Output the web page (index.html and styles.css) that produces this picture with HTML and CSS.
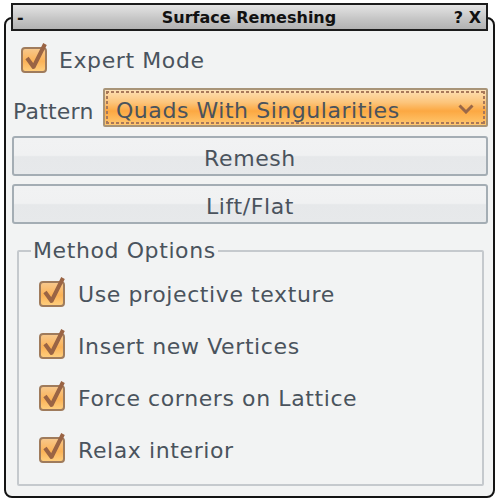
FILE: index.html
```html
<!DOCTYPE html>
<html>
<head>
<meta charset="utf-8">
<link rel="stylesheet" href="styles.css">
</head>
<body>
<div class="panel">
  <div class="titlebar">
    <span class="tb-left">-</span>
    <span class="tb-title">Surface Remeshing</span>
    <span class="tb-right">? X</span>
  </div>

  <div class="check-row expert">
    <svg class="cb" viewBox="0 0 28 32" width="28" height="32"><defs><linearGradient id="g1" x1="0" y1="0" x2="0" y2="1"><stop offset="0" stop-color="#f7c98f"/><stop offset="0.55" stop-color="#fbb257"/><stop offset="1" stop-color="#ffd080"/></linearGradient></defs><rect x="1" y="7" width="24" height="24" rx="3" fill="url(#g1)" stroke="#9f7b5c" stroke-width="2"/><path d="M6 17 L12.5 26 L24 3" fill="none" stroke="#9a6444" stroke-width="4" stroke-linejoin="round"/></svg>
    <span class="label">Expert Mode</span>
  </div>

  <div class="pattern-row">
    <span class="label">Pattern</span>
    <div class="combo">
      <span class="combo-text">Quads With Singularities</span>
      <svg class="chev" viewBox="0 0 16 10" width="16" height="10"><path d="M1.5 1.5 L8 8 L14.5 1.5" fill="none" stroke="#9a6848" stroke-width="3"/></svg>
    </div>
  </div>

  <div class="button remesh">Remesh</div>
  <div class="button lift">Lift/Flat</div>

  <fieldset class="options">
    <legend class="legend">Method Options</legend>
    <div class="opt-row">
      <svg class="cb" viewBox="0 0 28 32" width="28" height="32"><rect x="1" y="7" width="24" height="24" rx="3" fill="url(#g1)" stroke="#9f7b5c" stroke-width="2"/><path d="M6 17 L12.5 26 L24 3" fill="none" stroke="#9a6444" stroke-width="4" stroke-linejoin="round"/></svg>
      <span class="label">Use projective texture</span>
    </div>
    <div class="opt-row">
      <svg class="cb" viewBox="0 0 28 32" width="28" height="32"><rect x="1" y="7" width="24" height="24" rx="3" fill="url(#g1)" stroke="#9f7b5c" stroke-width="2"/><path d="M6 17 L12.5 26 L24 3" fill="none" stroke="#9a6444" stroke-width="4" stroke-linejoin="round"/></svg>
      <span class="label">Insert new Vertices</span>
    </div>
    <div class="opt-row">
      <svg class="cb" viewBox="0 0 28 32" width="28" height="32"><rect x="1" y="7" width="24" height="24" rx="3" fill="url(#g1)" stroke="#9f7b5c" stroke-width="2"/><path d="M6 17 L12.5 26 L24 3" fill="none" stroke="#9a6444" stroke-width="4" stroke-linejoin="round"/></svg>
      <span class="label">Force corners on Lattice</span>
    </div>
    <div class="opt-row">
      <svg class="cb" viewBox="0 0 28 32" width="28" height="32"><rect x="1" y="7" width="24" height="24" rx="3" fill="url(#g1)" stroke="#9f7b5c" stroke-width="2"/><path d="M6 17 L12.5 26 L24 3" fill="none" stroke="#9a6444" stroke-width="4" stroke-linejoin="round"/></svg>
      <span class="label">Relax interior</span>
    </div>
  </fieldset>
</div>
</body>
</html>
```

FILE: styles.css
```css
html, body {
  margin: 0;
  padding: 0;
  background: #ffffff;
}

body {
  font-family: "DejaVu Sans", Verdana, sans-serif;
  color: #4a535d;
  width: 500px;
  height: 504px;
  overflow: hidden;
}

.panel {
  box-sizing: border-box;
  width: 491px;
  height: 481px;
  margin: 17px 0 0 4px;
  border: 2px solid #141414;
  border-radius: 8px;
  background: #f2f3f3;
  padding: 0 5px 0 6px;
  display: flex;
  flex-direction: column;
}

.titlebar {
  box-sizing: border-box;
  height: 28px;
  margin: -16px 0 0 -1px;
  width: 477px;
  border: 2px solid #1c1c1c;
  background: linear-gradient(#e4e4e4, #c4c4c4 60%, #b2b2b2);
  display: flex;
  align-items: center;
  padding: 0 5px 0 4px;
  font-weight: bold;
  font-size: 16px;
  color: #111;
}

.tb-left {
  width: 50px;
}

.tb-title {
  flex: 1;
  text-align: center;
}

.tb-right {
  width: 50px;
  text-align: right;
}

.label {
  font-size: 22px;
  line-height: 26px;
  letter-spacing: 0.6px;
  white-space: nowrap;
}

.cb {
  display: block;
  flex: none;
}

.check-row {
  display: flex;
  align-items: center;
  height: 30px;
  margin-top: 11px;
  padding-left: 9px;
}

.check-row .label {
  margin-left: 10px;
  margin-top: 8px;
}

.pattern-row {
  display: flex;
  align-items: center;
  margin-top: 16px;
  height: 39px;
}

.pattern-row .label {
  margin-left: 1px;
  margin-top: 8px;
  width: 90px;
  letter-spacing: 0.2px;
}

.combo {
  position: relative;
  box-sizing: border-box;
  flex: 1;
  height: 39px;
  border: 2px solid #a89478;
  border-radius: 2px;
  background: linear-gradient(#fde0b4, #fcc57c 35%, #fca842 60%, #ffc870);
  display: flex;
  align-items: center;
  padding: 0 12px 0 11px;
}

.combo::before {
  content: "";
  position: absolute;
  inset: 1px;
  background:
    repeating-linear-gradient(90deg, #a8785a 0 3px, transparent 3px 5px) top / 100% 2px no-repeat,
    repeating-linear-gradient(90deg, #a8785a 0 3px, transparent 3px 5px) bottom / 100% 2px no-repeat,
    repeating-linear-gradient(180deg, #a8785a 0 3px, transparent 3px 5px) left / 2px 100% no-repeat,
    repeating-linear-gradient(180deg, #a8785a 0 3px, transparent 3px 5px) right / 2px 100% no-repeat;
}

.combo-text {
  flex: 1;
  font-size: 22px;
  line-height: 26px;
  letter-spacing: 0.55px;
  margin-top: 6px;
}

.chev {
  display: block;
  margin-top: 3px;
}

.button {
  box-sizing: border-box;
  height: 40px;
  border: 2px solid #a4adb4;
  border-radius: 3px;
  background: linear-gradient(#f1f2f3 0%, #f0f1f2 48%, #e6e8ea 52%, #e7e9eb 100%);
  display: flex;
  align-items: center;
  justify-content: center;
  font-size: 22px;
  letter-spacing: 0.6px;
  padding-top: 5px;
}

.remesh {
  margin-top: 9px;
}

.lift {
  margin-top: 8px;
}

.options {
  box-sizing: border-box;
  margin: 14px 4px 0 5px;
  height: 248px;
  border: 2px solid #c5c9cd;
  border-radius: 2px;
  padding: 1px 0 0 12px;
  min-width: 0;
}

.legend {
  padding: 0 2px;
  font-size: 22px;
  line-height: 26px;
  letter-spacing: 0.6px;
}

.opt-row {
  display: flex;
  align-items: center;
  height: 52px;
  padding-left: 8px;
}

.opt-row .label {
  margin-left: 11px;
  margin-top: 7px;
}
```
